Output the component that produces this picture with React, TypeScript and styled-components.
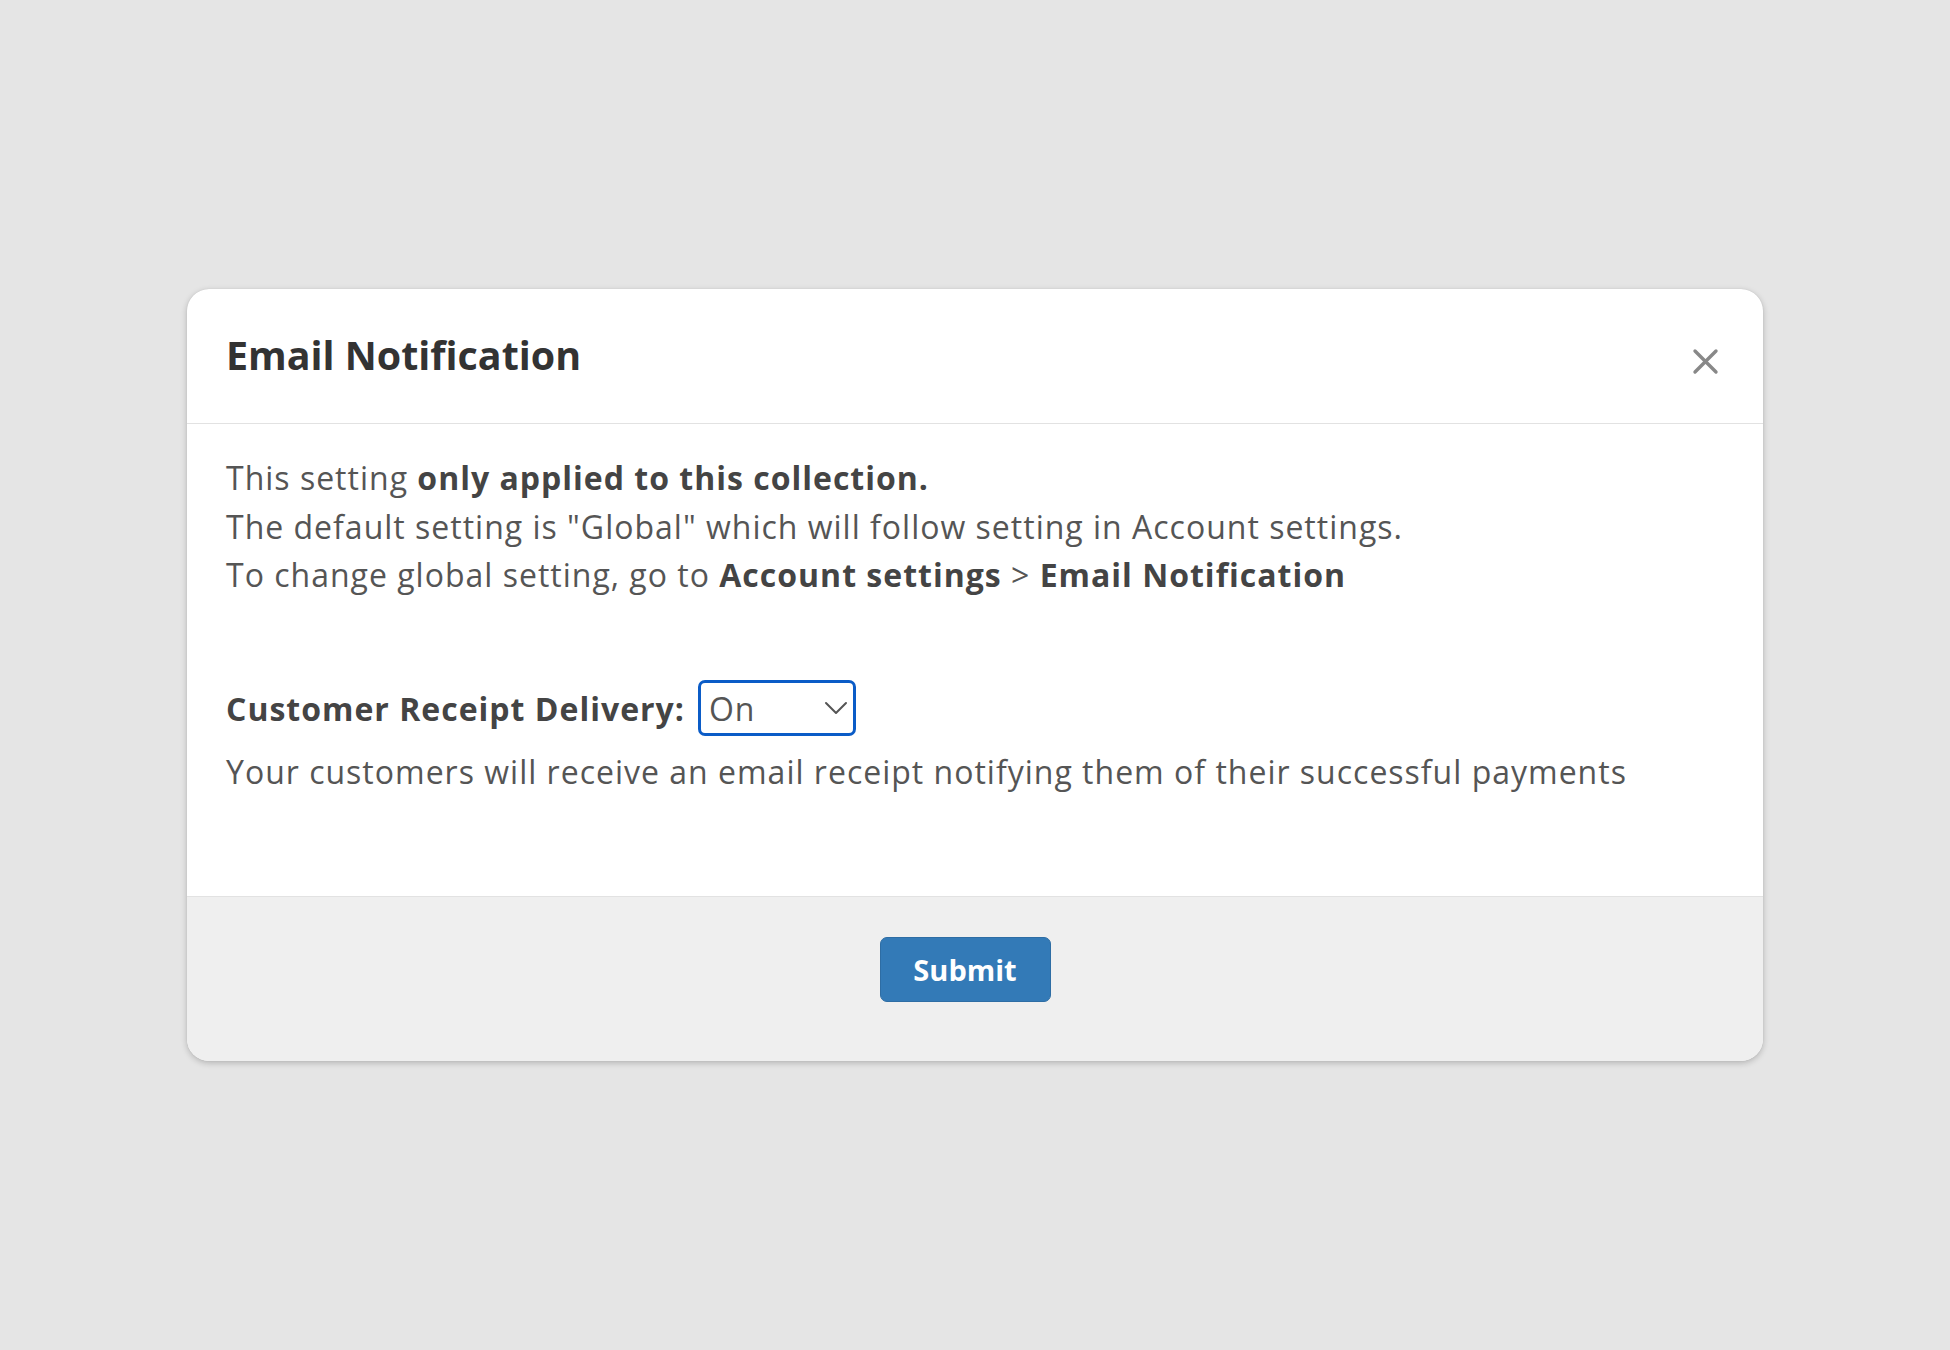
import React, { useState } from 'react';
import styled, { createGlobalStyle } from 'styled-components';

const GlobalStyle = createGlobalStyle`
    html, body {
        margin: 0;
        padding: 0;
        background: #e5e5e5;
        font-family: "Open Sans", "Noto Sans", Arial, sans-serif;
    }
`;

const Page = styled.main`
    min-height: 100vh;
    display: flex;
    align-items: center;
    justify-content: center;
`;

const Modal = styled.section`
    width: 1576px;
    background: #fff;
    border-radius: 22px;
    box-shadow: 0 2px 6px rgba(0, 0, 0, 0.22), 0 0 1px rgba(0, 0, 0, 0.15);
    overflow: hidden;
`;

const Header = styled.header`
    display: flex;
    justify-content: space-between;
    align-items: flex-start;
    padding: 42px 44px 44px 39px;
    border-bottom: 1px solid #e2e2e2;
`;

const Title = styled.h1`
    margin: 0;
    font-size: 39.4px;
    line-height: 48px;
    font-weight: 700;
    color: #333;
`;

const CloseButton = styled.button`
    margin-top: 17px;
    width: 27px;
    height: 27px;
    padding: 0;
    border: none;
    background: transparent;
    cursor: pointer;
    display: flex;
    align-items: center;
    justify-content: center;
`;

const Body = styled.div`
    padding: 30px 39px 100px;
    color: #555;
    font-size: 32px;
    line-height: 48.5px;
    letter-spacing: 1px;
`;

const Intro = styled.p`
    margin: 0 0 81px;

    strong {
        color: #444;
        font-weight: 700;
    }
`;

const FieldRow = styled.div`
    display: flex;
    align-items: center;
    height: 55px;
`;

const Label = styled.label`
    font-weight: 700;
    color: #444;
    margin-right: 13px;
    margin-top: 3px;
`;

const SelectWrap = styled.div`
    position: relative;
    width: 158px;
    height: 56px;
`;

const Select = styled.select`
    appearance: none;
    width: 100%;
    height: 100%;
    box-sizing: border-box;
    border: 3.5px solid #0b5cc7;
    border-radius: 7px;
    padding: 0 0 0 8px;
    font-family: inherit;
    font-size: 32px;
    letter-spacing: 1px;
    color: #555;
    background: #fff;
    outline: none;
`;

const Chevron = styled.svg`
    position: absolute;
    right: 8px;
    top: 50%;
    transform: translateY(-50%);
    pointer-events: none;
`;

const Hint = styled.p`
    margin: 12px 0 0;
`;

const Footer = styled.footer`
    display: flex;
    justify-content: center;
    padding: 40px 0 59px;
    background: #efefef;
    border-top: 1px solid #e2e2e2;
`;

const SubmitButton = styled.button`
    width: 171px;
    height: 65px;
    margin-right: 20px;
    background: #337ab7;
    border: 1px solid #2e6da4;
    border-radius: 7px;
    color: #fff;
    font-family: inherit;
    font-size: 29px;
    font-weight: 700;
    cursor: pointer;
`;

const App = () => {
    const [delivery, setDelivery] = useState('On');

    return (
        <>
            <GlobalStyle />
            <Page>
                <Modal>
                    <Header>
                        <Title>Email Notification</Title>
                        <CloseButton aria-label="Close">
                            <svg width="27" height="27" viewBox="0 0 27 27">
                                <path d="M3 3 L24 24 M24 3 L3 24" stroke="#888" strokeWidth="3.4" strokeLinecap="round" />
                            </svg>
                        </CloseButton>
                    </Header>
                    <Body>
                        <Intro>
                            This setting <strong>only applied to this collection.</strong>
                            <br />
                            The default setting is "Global" which will follow setting in Account settings.
                            <br />
                            To change global setting, go to <strong>Account settings</strong> &gt; <strong>Email Notification</strong>
                        </Intro>
                        <FieldRow>
                            <Label htmlFor="delivery">Customer Receipt Delivery:</Label>
                            <SelectWrap>
                                <Select id="delivery" value={delivery} onChange={e => setDelivery(e.target.value)}>
                                    <option>On</option>
                                    <option>Off</option>
                                    <option>Global</option>
                                </Select>
                                <Chevron width="24" height="14" viewBox="0 0 24 14">
                                    <path d="M2 2 L12 12 L22 2" fill="none" stroke="#555" strokeWidth="2" strokeLinecap="round" strokeLinejoin="round" />
                                </Chevron>
                            </SelectWrap>
                        </FieldRow>
                        <Hint>Your customers will receive an email receipt notifying them of their successful payments</Hint>
                    </Body>
                    <Footer>
                        <SubmitButton type="button">Submit</SubmitButton>
                    </Footer>
                </Modal>
            </Page>
        </>
    );
};

export default App;
